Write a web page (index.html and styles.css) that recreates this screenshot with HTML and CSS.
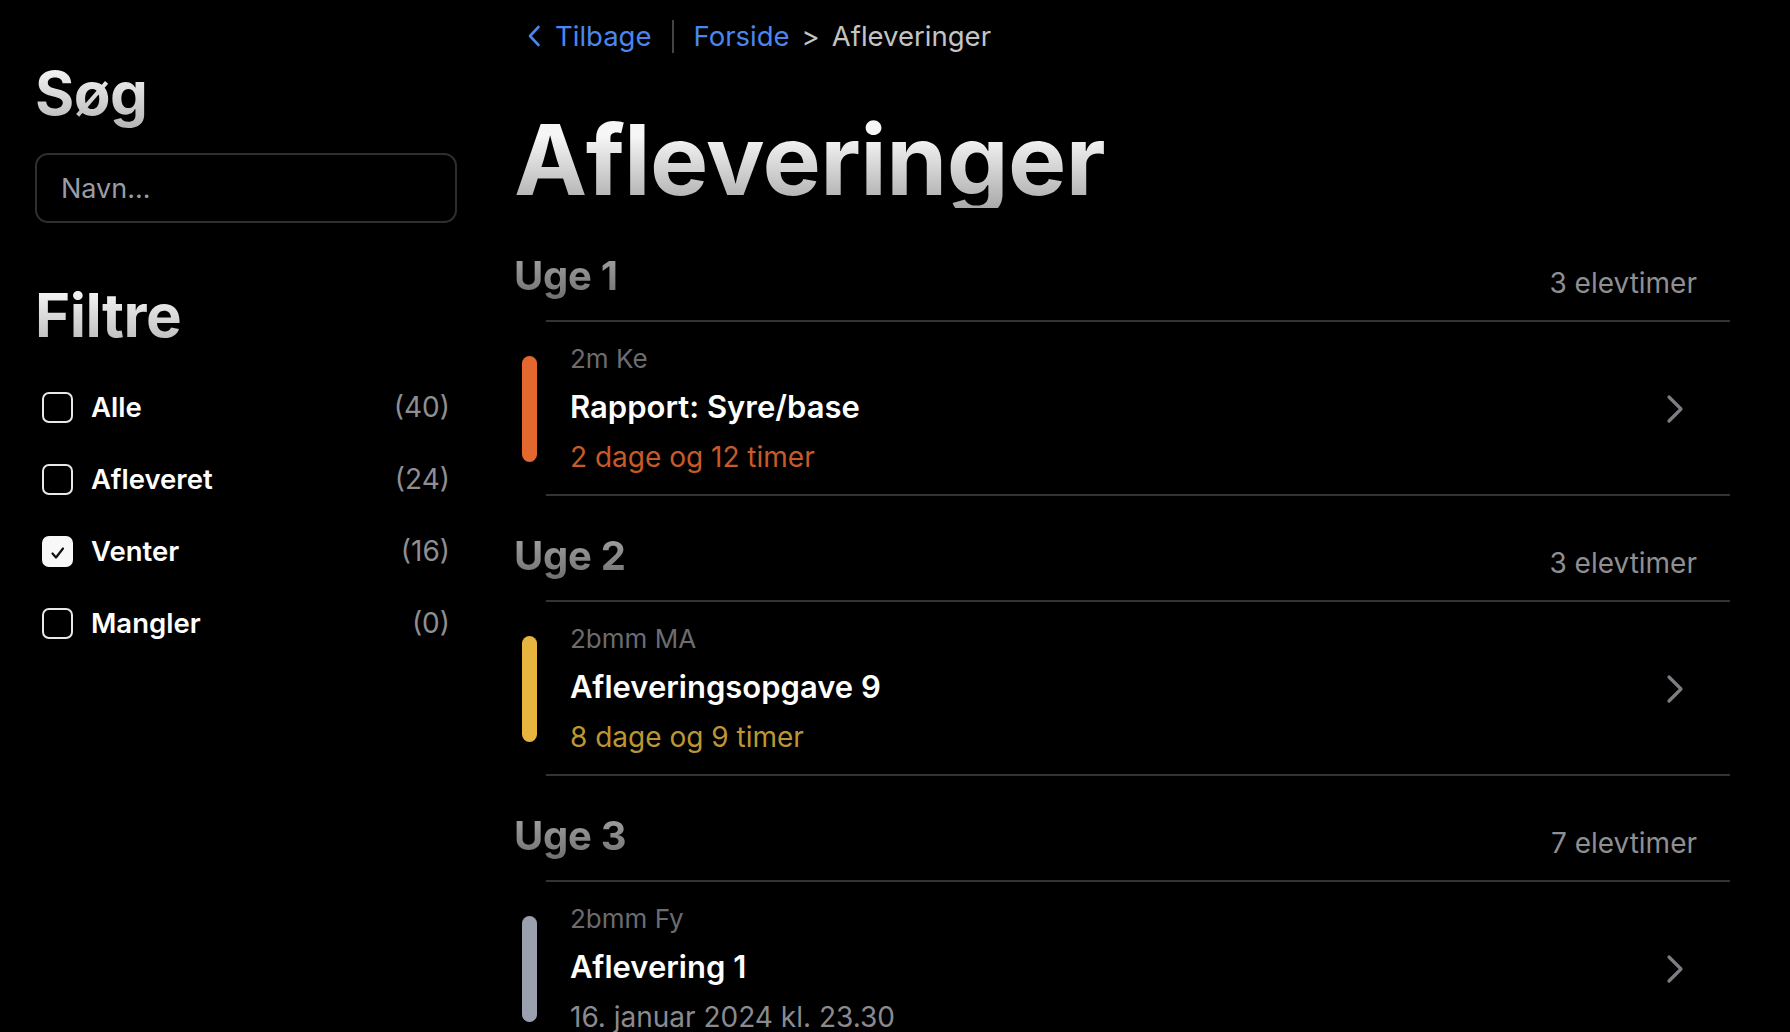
FILE: index.html
```html
<!DOCTYPE html>
<html lang="da">
<head>
<meta charset="utf-8">
<title>Afleveringer</title>
<link rel="stylesheet" href="styles.css">
</head>
<body>
<div class="app">
  <aside class="sidebar">
    <h2 class="side-title">Søg</h2>
    <input class="search" type="text" placeholder="Navn...">
    <h2 class="side-title filters-title">Filtre</h2>
    <ul class="filters">
      <li class="filter"><span class="box"></span><span class="flabel">Alle</span><span class="fcount">(40)</span></li>
      <li class="filter"><span class="box"></span><span class="flabel">Afleveret</span><span class="fcount">(24)</span></li>
      <li class="filter"><span class="box checked"><svg viewBox="0 0 20 20" width="20" height="20"><polyline points="4.5,10.5 8,14.5 15,5.5" fill="none" stroke="#111" stroke-width="2.2" stroke-linecap="round" stroke-linejoin="round"/></svg></span><span class="flabel">Venter</span><span class="fcount">(16)</span></li>
      <li class="filter"><span class="box"></span><span class="flabel">Mangler</span><span class="fcount">(0)</span></li>
    </ul>
  </aside>
  <main class="main">
    <nav class="crumbs">
      <a class="back"><svg class="back-chev" viewBox="0 0 14 22" width="14" height="22"><polyline points="11.5,2 3,11 11.5,20" fill="none" stroke="#4a86ee" stroke-width="2.6" stroke-linecap="round" stroke-linejoin="round"/></svg>Tilbage</a>
      <span class="crumb-sep"></span>
      <a class="crumb-link">Forside</a>
      <span class="crumb-gt">&gt;</span>
      <span class="crumb-current">Afleveringer</span>
    </nav>
    <h1 class="page-title">Afleveringer</h1>

    <section class="week">
      <header class="week-head"><h3 class="week-title">Uge 1</h3><span class="week-hours">3 elevtimer</span></header>
      <ul class="items">
        <li class="item">
          <span class="bar-col"><span class="bar bar-orange"></span></span>
          <div class="item-body">
            <div class="item-text">
              <div class="course">2m Ke</div>
              <div class="item-title">Rapport: Syre/base</div>
              <div class="due due-orange">2 dage og 12 timer</div>
            </div>
            <svg class="chev" viewBox="0 0 18 30" width="18" height="30"><polyline points="3,3 15,15 3,27" fill="none" stroke="#7d7d82" stroke-width="3.2" stroke-linecap="round" stroke-linejoin="round"/></svg>
          </div>
        </li>
      </ul>
    </section>

    <section class="week">
      <header class="week-head"><h3 class="week-title">Uge 2</h3><span class="week-hours">3 elevtimer</span></header>
      <ul class="items">
        <li class="item">
          <span class="bar-col"><span class="bar bar-yellow"></span></span>
          <div class="item-body">
            <div class="item-text">
              <div class="course">2bmm MA</div>
              <div class="item-title">Afleveringsopgave 9</div>
              <div class="due due-yellow">8 dage og 9 timer</div>
            </div>
            <svg class="chev" viewBox="0 0 18 30" width="18" height="30"><polyline points="3,3 15,15 3,27" fill="none" stroke="#7d7d82" stroke-width="3.2" stroke-linecap="round" stroke-linejoin="round"/></svg>
          </div>
        </li>
      </ul>
    </section>

    <section class="week">
      <header class="week-head"><h3 class="week-title">Uge 3</h3><span class="week-hours">7 elevtimer</span></header>
      <ul class="items">
        <li class="item">
          <span class="bar-col"><span class="bar bar-gray"></span></span>
          <div class="item-body">
            <div class="item-text">
              <div class="course">2bmm Fy</div>
              <div class="item-title">Aflevering 1</div>
              <div class="due due-gray">16. januar 2024 kl. 23.30</div>
            </div>
            <svg class="chev" viewBox="0 0 18 30" width="18" height="30"><polyline points="3,3 15,15 3,27" fill="none" stroke="#7d7d82" stroke-width="3.2" stroke-linecap="round" stroke-linejoin="round"/></svg>
          </div>
        </li>
      </ul>
    </section>
  </main>
</div>
</body>
</html>
```

FILE: styles.css
```css
* { box-sizing: border-box; }
html, body {
  margin: 0;
  padding: 0;
  background: #000;
  color: #fff;
  font-family: Inter, "Noto Sans", "Liberation Sans", sans-serif;
  height: 100%;
  overflow: hidden;
}
ul { list-style: none; margin: 0; padding: 0; }
h1, h2, h3 { margin: 0; }

.app {
  display: flex;
  align-items: flex-start;
}

/* Sidebar */
.sidebar {
  flex: 0 0 422px;
  margin-left: 35px;
  padding-top: 57px;
}
.side-title {
  font-size: 60px;
  line-height: 72px;
  font-weight: 700;
  letter-spacing: -0.5px;
  background: linear-gradient(180deg, #f2f2f2 20%, #b4b4b4 100%);
  -webkit-background-clip: text;
  background-clip: text;
  color: transparent;
  display: inline-block;
}
.search {
  display: block;
  width: 422px;
  height: 70px;
  margin-top: 24px;
  background: #000;
  border: 2px solid #2f2f31;
  border-radius: 13px;
  padding: 0 24px;
  font-family: Inter, "Noto Sans", sans-serif;
  font-size: 27px;
  color: #fff;
  outline: none;
}
.search::placeholder { color: #9b9ba5; }
.filters-title { margin-top: 56px; }
.filters { margin-top: 20px; }
.filter {
  display: flex;
  align-items: center;
  height: 72px;
  padding: 0 7px 0 7px;
}
.box {
  flex: 0 0 31px;
  width: 31px;
  height: 31px;
  border: 2px solid #e8e8e8;
  border-radius: 7px;
  display: flex;
  align-items: center;
  justify-content: center;
}
.box.checked {
  background: #f8f8f8;
  border-color: #f8f8f8;
}
.box svg { margin-top: 3px; }
.flabel {
  margin-left: 18px;
  font-size: 27.5px;
  font-weight: 600;
  color: #fff;
  flex: 1;
}
.fcount {
  font-size: 28px;
  color: #8e8e93;
}

/* Main */
.main {
  margin-left: 57px;
  width: 1216px;
  padding-top: 16px;
}
.crumbs {
  display: flex;
  align-items: center;
  height: 40px;
  padding-left: 13px;
  font-size: 27.5px;
  line-height: 40px;
}
.back {
  display: flex;
  align-items: center;
  color: #4a86ee;
}
.back-chev { margin-right: 14px; }
.crumb-sep {
  width: 2px;
  height: 33px;
  background: #444446;
  margin: 0 20px 0 20px;
}
.crumb-link { color: #4a86ee; }
.crumb-gt {
  color: #c4c4c4;
  margin: 0 12px 0 12px;
}
.crumb-current { color: #c4c4c4; }

.page-title {
  margin-top: 56px;
  font-size: 98px;
  line-height: 96px;
  font-weight: 700;
  letter-spacing: -0.6px;
  background: linear-gradient(180deg, #f6f6f6 25%, #a9a9a9 100%);
  -webkit-background-clip: text;
  background-clip: text;
  color: transparent;
  display: inline-block;
}

.week { margin-top: 36px; }
.week:first-of-type { margin-top: 44px; }
.week-head {
  display: flex;
  justify-content: space-between;
  align-items: flex-end;
  padding: 0 33px 20px 0;
}
.week-title {
  font-size: 40px;
  line-height: 48px;
  font-weight: 700;
  letter-spacing: -0.3px;
  background: linear-gradient(180deg, #a0a0a0 10%, #6f6f6f 100%);
  -webkit-background-clip: text;
  background-clip: text;
  color: transparent;
}
.week-hours {
  font-size: 28px;
  line-height: 34px;
  color: #8e8e93;
}

.item {
  display: flex;
  align-items: stretch;
}
.bar-col {
  flex: 0 0 32px;
  display: flex;
  align-items: center;
  padding-left: 8px;
  border-top: 2px solid transparent;
}
.bar {
  width: 15px;
  height: 106px;
  border-radius: 8px;
}
.bar-orange { background: #e3682f; }
.bar-yellow { background: #e6b43f; }
.bar-gray { background: #9aa0ae; }

.item-body {
  flex: 1;
  display: flex;
  align-items: center;
  justify-content: space-between;
  border-top: 2px solid #333335;
  border-bottom: 2px solid #333335;
  padding: 21px 48px 19px 24px;
}
.course {
  font-size: 26px;
  line-height: 32px;
  color: #6c6c70;
}
.item-title {
  font-size: 31px;
  line-height: 64px;
  font-weight: 600;
  color: #fff;
}
.due {
  font-size: 28px;
  line-height: 36px;
}
.due-orange { color: #c85a29; }
.due-yellow { color: #bd9634; }
.due-gray { color: #8a8a8f; }
.chev { margin-right: -2px; }
```
